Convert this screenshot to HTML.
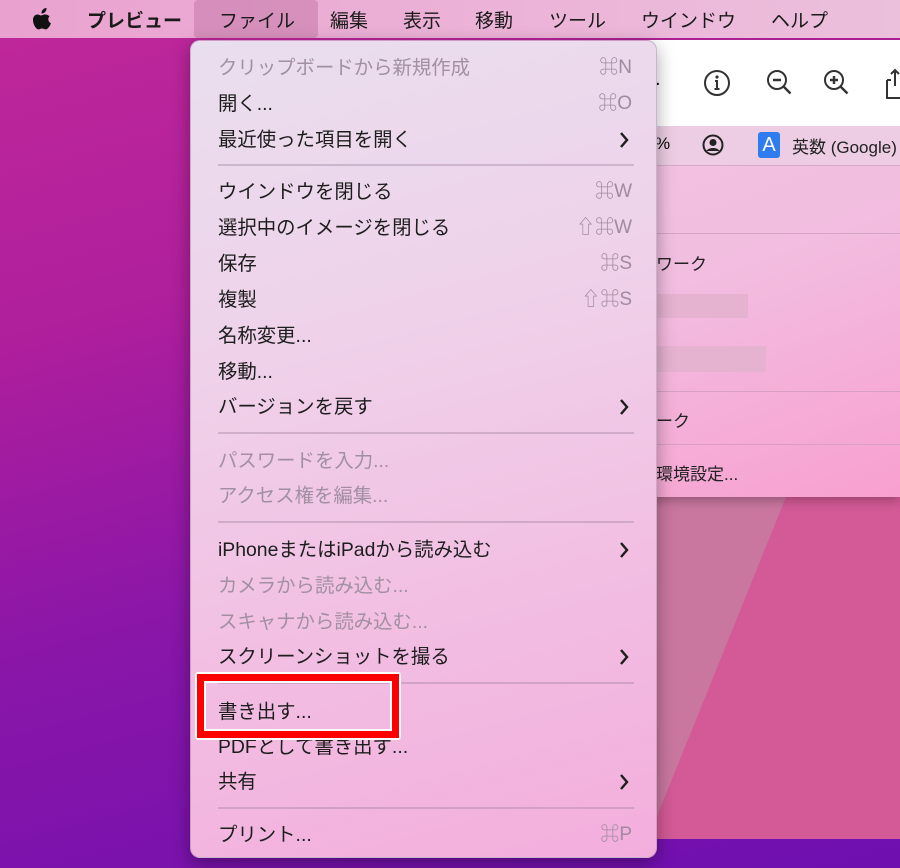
<!DOCTYPE html>
<html><head><meta charset="utf-8"><style>
*{margin:0;padding:0;box-sizing:border-box}
html,body{width:900px;height:868px;overflow:hidden}
body{position:relative;font-family:"Liberation Sans","Noto Sans CJK JP",sans-serif;
background:linear-gradient(165deg,#c0289a 0%,#b01f9c 30%,#8a16a8 60%,#6e0fb0 100%);}
.pinkwin{position:absolute;left:656px;top:497px;width:244px;height:342px;background:#d35a96;overflow:hidden}
.pinkwin div{position:absolute;left:-150px;top:0;width:280px;height:400px;background:#c9779f;transform:skewX(-22deg);transform-origin:top left}
.menubar{position:absolute;left:0;top:0;width:900px;height:38px;background:linear-gradient(90deg,#e9a2cf,#ecb4d8 60%,#ebc0dc);font-size:19px;color:#1a1a1a}
.menubar span{position:absolute;top:6px}
.win{position:absolute;left:560px;top:40px;width:340px;height:457px;background:linear-gradient(160deg,#f4c4e2,#f2bde0 50%,#f8a0d0);box-shadow:0 4px 10px rgba(0,0,0,.25)}
.tool{position:absolute;left:0;top:0;width:340px;height:86px;background:#fff}
.tabs{position:absolute;left:0;top:86px;width:340px;height:40px;background:#eccde3;border-bottom:1px solid #d6a9c6}
.menu{position:absolute;left:190px;top:40px;width:467px;height:818px;border-radius:10px;
background:linear-gradient(165deg,#e9dfee 0%,#efd2ea 35%,#f2bde2 70%,#f3aedd 100%);box-shadow:0 6px 18px rgba(0,0,0,.35);border:1px solid rgba(150,120,150,.4)}
.it{position:absolute;left:27px;font-size:19.4px;color:#1d1d1d;white-space:nowrap;line-height:24px}
.dis{color:#a290a2}
.sc{position:absolute;right:24px;font-size:19px;color:#a08aa0;line-height:24px}
.ar{position:absolute;right:27px;width:10px;height:16px}
.sep{position:absolute;left:27px;right:22px;height:2px;background:rgba(160,130,160,.4)}
.red{position:absolute;left:195px;top:672px;width:206px;height:68px;border:2px solid #fff;border-radius:3px}
.red>div{position:absolute;inset:0;border:7px solid #f00}
.red>div>div{position:absolute;inset:0;border:2px solid #fff}
</style></head><body>
<div class="pinkwin"><div></div></div>
<div class="win">
 <div class="tool">
  <span style="position:absolute;left:95px;top:28px;font-size:20px">.</span>
  <svg style="position:absolute;left:142px;top:28px" width="30" height="30"><circle cx="15" cy="15" r="12" fill="none" stroke="#333" stroke-width="2"/><circle cx="15" cy="9" r="1.6" fill="#333"/><path d="M13 13h2v8M12.5 21h5" stroke="#333" stroke-width="2" fill="none"/></svg>
  <svg style="position:absolute;left:205px;top:28px" width="30" height="30"><circle cx="12" cy="12" r="9" fill="none" stroke="#333" stroke-width="2"/><path d="M18.5 18.5l7 7M8 12h8" stroke="#333" stroke-width="2.4"/></svg>
  <svg style="position:absolute;left:262px;top:28px" width="30" height="30"><circle cx="12" cy="12" r="9" fill="none" stroke="#333" stroke-width="2"/><path d="M18.5 18.5l7 7M8 12h8M12 8v8" stroke="#333" stroke-width="2.4"/></svg>
  <svg style="position:absolute;left:325px;top:26px" width="20" height="34"><path d="M2 14h4M2 14v18h16" stroke="#333" stroke-width="2" fill="none"/><path d="M10 4v16M6 8l4-4 4 4" stroke="#333" stroke-width="2" fill="none"/></svg>
 </div>
 <div class="tabs">
  <span style="position:absolute;left:95px;top:8px;font-size:17px">%</span>
  <svg style="position:absolute;left:142px;top:8px" width="22" height="22"><circle cx="11" cy="11" r="9.5" fill="none" stroke="#222" stroke-width="2"/><circle cx="11" cy="8.5" r="3.5" fill="#222"/><path d="M4.5 17c2-4 11-4 13 0" fill="#222"/></svg>
  <span style="position:absolute;left:198px;top:6px;width:22px;height:26px;background:#2f7bf0;border-radius:3px;color:#fff;font-size:20px;text-align:center;line-height:26px">A</span>
  <span style="position:absolute;left:232px;top:7px;font-size:17px;color:#222">英数 (Google)</span>
 </div>
 <div style="position:absolute;left:0;top:193px;width:340px;height:1px;background:#d7a6c6"></div>
 <span style="position:absolute;left:96px;top:210px;font-size:17px;color:#222">ワーク</span>
 <div style="position:absolute;left:96px;top:254px;width:92px;height:24px;background:#e5b2d0"></div>
 <div style="position:absolute;left:96px;top:306px;width:110px;height:26px;background:#e5b2d0"></div>
 <div style="position:absolute;left:0;top:351px;width:340px;height:1px;background:#d7a0c2"></div>
 <span style="position:absolute;left:96px;top:367px;font-size:17px;color:#222">ーク</span>
 <div style="position:absolute;left:0;top:404px;width:340px;height:1px;background:#d7a0c2"></div>
 <span style="position:absolute;left:96px;top:420px;font-size:17px;color:#222">環境設定...</span>
</div>
<div class="menubar">
 <svg style="position:absolute;left:33px;top:8px" width="20" height="22" viewBox="0 0 20 22"><path d="M13.5 0c.2 1.6-.5 3-1.4 4-1 1-2.3 1.6-3.6 1.5-.2-1.5.5-3 1.4-3.9C10.9.6 12.3 0 13.5 0zM17.5 7.4c-1.1.7-2.2 2-2.2 3.9 0 2.3 1.6 3.5 2.6 3.9-.4 1.2-.9 2.3-1.7 3.4-1 1.4-2 2.8-3.5 2.8s-1.9-.9-3.6-.9c-1.7 0-2.2.9-3.6.9-1.5 0-2.6-1.5-3.6-2.9C.7 16.6 0 13.9 0 11.9c0-3.5 2.3-5.4 4.5-5.4 1.5 0 2.6 1 3.5 1 .9 0 2.2-1 3.9-1 .7 0 3 .1 4.6 2.1z" fill="#111"/></svg>
 <span style="left:87px;font-weight:bold">プレビュー</span>
 <div style="position:absolute;left:194px;top:0;width:124px;height:38px;background:rgba(190,110,160,.45);border-radius:4px"></div>
 <span style="left:219px">ファイル</span>
 <span style="left:330px">編集</span>
 <span style="left:403px">表示</span>
 <span style="left:475px">移動</span>
 <span style="left:549px">ツール</span>
 <span style="left:641px">ウインドウ</span>
 <span style="left:771px">ヘルプ</span>
</div>
<div class="menu">
 <span class="it dis" style="top:15px">クリップボードから新規作成</span><span class="sc" style="top:15px">⌘N</span>
 <span class="it" style="top:51px">開く...</span><span class="sc" style="top:51px">⌘O</span>
 <span class="it" style="top:87px">最近使った項目を開く</span><svg class="ar" style="top:91px"><path d="M2 1l6 7-6 7" stroke="#1d1d1d" stroke-width="2.4" fill="none"/></svg>
 <div class="sep" style="top:123px"></div>
 <span class="it" style="top:139px">ウインドウを閉じる</span><span class="sc" style="top:139px">⌘W</span>
 <span class="it" style="top:175px">選択中のイメージを閉じる</span><span class="sc" style="top:175px">⇧⌘W</span>
 <span class="it" style="top:211px">保存</span><span class="sc" style="top:211px">⌘S</span>
 <span class="it" style="top:247px">複製</span><span class="sc" style="top:247px">⇧⌘S</span>
 <span class="it" style="top:283px">名称変更...</span>
 <span class="it" style="top:319px">移動...</span>
 <span class="it" style="top:354px">バージョンを戻す</span><svg class="ar" style="top:358px"><path d="M2 1l6 7-6 7" stroke="#1d1d1d" stroke-width="2.4" fill="none"/></svg>
 <div class="sep" style="top:391px"></div>
 <span class="it dis" style="top:408px">パスワードを入力...</span>
 <span class="it dis" style="top:443px">アクセス権を編集...</span>
 <div class="sep" style="top:480px"></div>
 <span class="it" style="top:497px">iPhoneまたはiPadから読み込む</span><svg class="ar" style="top:501px"><path d="M2 1l6 7-6 7" stroke="#1d1d1d" stroke-width="2.4" fill="none"/></svg>
 <span class="it dis" style="top:533px">カメラから読み込む...</span>
 <span class="it dis" style="top:569px">スキャナから読み込む...</span>
 <span class="it" style="top:604px">スクリーンショットを撮る</span><svg class="ar" style="top:608px"><path d="M2 1l6 7-6 7" stroke="#1d1d1d" stroke-width="2.4" fill="none"/></svg>
 <div class="sep" style="top:641px"></div>
 <span class="it" style="top:659px">書き出す...</span>
 <span class="it" style="top:694px">PDFとして書き出す...</span>
 <span class="it" style="top:729px">共有</span><svg class="ar" style="top:733px"><path d="M2 1l6 7-6 7" stroke="#1d1d1d" stroke-width="2.4" fill="none"/></svg>
 <div class="sep" style="top:766px"></div>
 <span class="it" style="top:782px">プリント...</span><span class="sc" style="top:782px">⌘P</span>
</div>
<div class="red"><div><div></div></div></div>
</body></html>
